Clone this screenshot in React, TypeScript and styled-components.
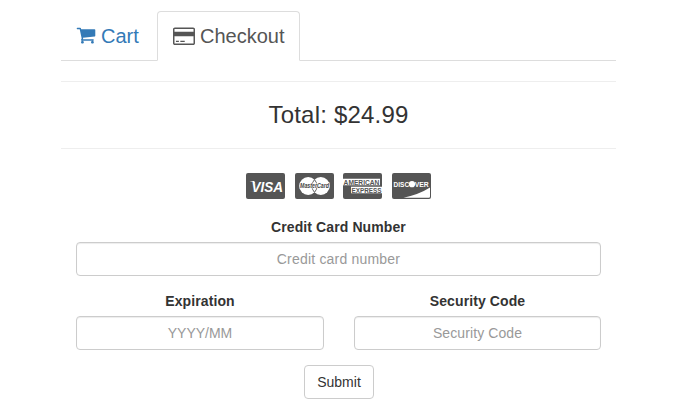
import React from "react";
import styled, { createGlobalStyle } from "styled-components";

const Global = createGlobalStyle`
  * { box-sizing: border-box; }
  body { margin: 0; background: #fff; font: 14px/20px "Liberation Sans", Arial, sans-serif; color: #333; }
`;

const Page = styled.main`
  width: 555px;
  margin-left: 61px;
  padding-top: 11px;
`;

const Tabs = styled.nav`
  display: flex;
  height: 50px;
  border-bottom: 1px solid #ddd;
`;

const Tab = styled.a<{ $active?: boolean; $width: number }>`
  display: flex;
  align-items: center;
  width: ${p => p.$width}px;
  height: 50px;
  padding-left: 15px;
  margin-right: 2px;
  font-size: 20px;
  white-space: nowrap;
  color: ${p => (p.$active ? "#555" : "#337ab7")};
  border: 1px solid;
  border-color: ${p => (p.$active ? "#ddd #ddd #fff" : "transparent")};
  border-radius: 4px 4px 0 0;
`;

const TabIcon = styled.svg<{ $margin: string }>`
  display: block;
  flex: none;
  margin: ${p => p.$margin};
  fill: currentColor;
`;

const Total = styled.h3`
  margin: 20px 0 0;
  height: 68px;
  border: solid #eee;
  border-width: 1px 0;
  text-align: center;
  font-size: 24px;
  font-weight: 400;
  line-height: 66px;
  letter-spacing: 0.2px;
`;

const Cards = styled.div`
  display: flex;
  justify-content: center;
  gap: 9.6px;
  margin-top: 24px;
  height: 26px;
`;

const CardSvg = styled.svg`
  display: block;
  width: 39px;
  height: 26px;
  overflow: visible;
  font-family: "Liberation Sans", Arial, sans-serif;
  font-weight: 700;
  fill: #fff;
`;

const Form = styled.form`
  display: flex;
  flex-direction: column;
  gap: 15px;
  padding: 0 15px;
  margin-top: 18px;
`;

const Row = styled.div`
  display: grid;
  grid-template-columns: 248px 247px;
  gap: 30px;
`;

const Field = styled.div`
  display: flex;
  flex-direction: column;
  gap: 5px;
`;

const Label = styled.label`
  text-align: center;
  font-weight: 700;
  letter-spacing: 0.1px;
`;

const Input = styled.input<{ $spacing: number }>`
  width: 100%;
  height: 34px;
  padding: 6px 12px;
  border: 1px solid #ccc;
  border-radius: 4px;
  box-shadow: inset 0 1px 1px rgba(0, 0, 0, 0.075);
  text-align: center;
  font: 14px/20px "Liberation Sans", Arial, sans-serif;
  letter-spacing: ${p => p.$spacing}px;
  &::placeholder { color: #999; opacity: 1; }
`;

const Submit = styled.button`
  align-self: center;
  width: 70px;
  height: 34px;
  padding: 0;
  margin-left: 1px;
  border: 1px solid #ccc;
  border-radius: 4px;
  background: #fff;
  color: #333;
  font: 14px/20px "Liberation Sans", Arial, sans-serif;
`;

const CartIcon = () => (
  <TabIcon $margin="-2px 5px 0 -1px" width="20" height="20" viewBox="0 0 1792 1792">
    <path d="M704 1536q0 52-38 90t-90 38-90-38-38-90 38-90 90-38 90 38 38 90zm896 0q0 52-38 90t-90 38-90-38-38-90 38-90 90-38 90 38 38 90zm128-1088v512q0 24-16.5 42.5t-40.5 21.5l-1044 122q13 60 13 70 0 16-24 64h920q26 0 45 19t19 45-19 45-45 19h-1024q-26 0-45-19t-19-45q0-11 8-31.5t16-36 21.5-40 15.5-29.5l-177-823h-204q-26 0-45-19t-19-45 19-45 45-19h256q16 0 28.5 6.5t19.5 15.5 13 24.5 8 26 5.5 29.5 4.5 26h1201q26 0 45 19t19 45z" />
  </TabIcon>
);

const CreditCardIcon = () => (
  <TabIcon $margin="0 5px 0 0" width="22" height="20.5" viewBox="0 0 1920 1792">
    <path d="M1760 128q66 0 113 47t47 113v1216q0 66-47 113t-113 47h-1600q-66 0-113-47t-47-113v-1216q0-66 47-113t113-47h1600zm-1600 128q-13 0-22.5 9.5t-9.5 22.5v224h1664v-224q0-13-9.5-22.5t-22.5-9.5h-1600zm1600 1280q13 0 22.5-9.5t9.5-22.5v-608h-1664v608q0 13 9.5 22.5t22.5 9.5h1600zm-1504-128v-128h256v128h-256zm384 0v-128h384v128h-384z" />
  </TabIcon>
);

const Card = ({ children }: { children: React.ReactNode }) => (
  <CardSvg viewBox="0 0 39 26">
    <rect width="39" height="26" rx="2" fill="#555" />
    {children}
  </CardSvg>
);

const Visa = () => (
  <Card>
    <path d="M3.5 8h4.8l1.5 5.2L8.7 10Q6.8 8.6 3.5 8Z" />
    <text x="5.5" y="18.8" fontSize="15.5" fontStyle="italic" textLength="31.5" lengthAdjust="spacingAndGlyphs">VISA</text>
  </Card>
);

const MasterCard = () => (
  <Card>
    <circle cx="13.2" cy="13" r="9" />
    <circle cx="25.8" cy="13" r="9" />
    <path d="M19.5 6.6Q14.2 13 19.5 19.4Q24.8 13 19.5 6.6Z" fill="none" stroke="#555" strokeWidth="0.9" />
    <text x="5" y="15.2" fontSize="6.5" fontStyle="italic" fill="#444" stroke="#fff" strokeWidth="0.9" paintOrder="stroke" textLength="29" lengthAdjust="spacingAndGlyphs">MasterCard</text>
  </Card>
);

const Amex = () => (
  <Card>
    <path d="M0 5.8H37V12.2H0ZM8 13.8H39V20.2H8Z" />
    <g fill="#555" fontSize="7.2">
      <text x="0.6" y="11.6" textLength="35.8" lengthAdjust="spacingAndGlyphs">AMERICAN</text>
      <text x="8.5" y="19.6" textLength="30" lengthAdjust="spacingAndGlyphs">EXPRESS</text>
    </g>
  </Card>
);

const Discover = () => (
  <Card>
    <text x="1.6" y="13.9" fontSize="7.8" textLength="15.5" lengthAdjust="spacingAndGlyphs">DISC</text>
    <circle cx="20" cy="11.2" r="3.1" />
    <text x="22.7" y="13.9" fontSize="7.8" textLength="14" lengthAdjust="spacingAndGlyphs">VER</text>
    <path d="M11.5 24.7Q27 21.5 38 14.5V23.5Q38 24.7 36.8 24.7Z" />
  </Card>
);

export default function App() {
  return (
    <Page>
      <Global />
      <Tabs>
        <Tab $width={94}><CartIcon />Cart</Tab>
        <Tab $active $width={143}><CreditCardIcon />Checkout</Tab>
      </Tabs>
      <Total>Total: $24.99</Total>
      <Cards><Visa /><MasterCard /><Amex /><Discover /></Cards>
      <Form>
        <Field>
          <Label>Credit Card Number</Label>
          <Input $spacing={0.2} placeholder="Credit card number" />
        </Field>
        <Row>
          <Field>
            <Label>Expiration</Label>
            <Input $spacing={0} placeholder="YYYY/MM" />
          </Field>
          <Field>
            <Label>Security Code</Label>
            <Input $spacing={0.1} placeholder="Security Code" />
          </Field>
        </Row>
        <Submit type="button">Submit</Submit>
      </Form>
    </Page>
  );
}
